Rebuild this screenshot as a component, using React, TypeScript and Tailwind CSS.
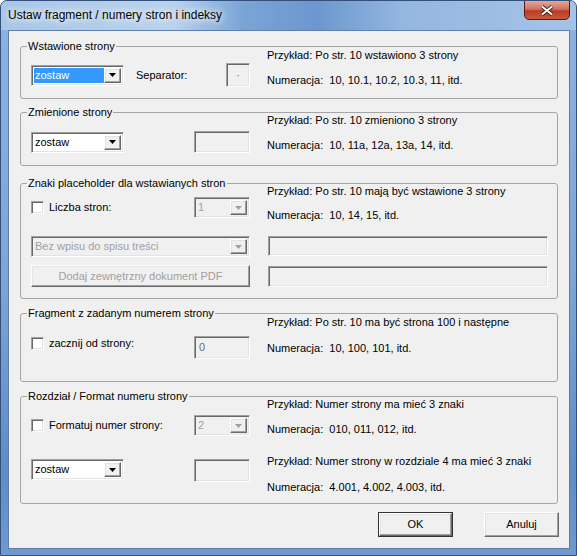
import React from "react";

const sunken =
  "border border-t-[#a0a0a0] border-l-[#a0a0a0] border-b-white border-r-white shadow-[inset_1px_1px_0_#696969,inset_-1px_-1px_0_#e3e3e3]";
const raised =
  "border border-t-white border-l-white border-b-[#696969] border-r-[#696969] shadow-[inset_-1px_-1px_0_#a0a0a0,inset_1px_1px_0_#e3e3e3]";

function Arrow({ disabled }: { disabled?: boolean }) {
  return (
    <svg width="7" height="4" viewBox="0 0 7 4">
      <path d="M0 0h7L3.5 4z" fill={disabled ? "#a0a0a0" : "#000"} />
    </svg>
  );
}

function Combo({
  value,
  width,
  selected,
  disabled,
}: {
  value: string;
  width: string;
  selected?: boolean;
  disabled?: boolean;
}) {
  return (
    <div
      className={`flex h-[21px] ${width} ${sunken} ${disabled ? "bg-[#f0f0f0]" : "bg-white"} p-[2px]`}
    >
      <div className="flex flex-1 items-center">
        <span
          className={`flex h-full items-center pl-px pr-2 ${
            selected ? "flex-1 bg-[#3399ff] text-white" : disabled ? "text-[#a0a0a0]" : "text-black"
          }`}
        >
          {value}
        </span>
      </div>
      <div className={`flex w-[17px] items-center justify-center bg-[#f0f0f0] ${raised}`}>
        <Arrow disabled={disabled} />
      </div>
    </div>
  );
}

function TextBox({ className, children }: { className: string; children?: React.ReactNode }) {
  return <div className={`flex bg-[#f0f0f0] ${sunken} ${className}`}>{children}</div>;
}

function Check({ label }: { label: string }) {
  return (
    <div className="flex items-center">
      <div className={`h-[13px] w-[13px] bg-white ${sunken}`} />
      <span className="ml-[5px]">{label}</span>
    </div>
  );
}

function Group({
  title,
  height,
  mt,
  children,
}: {
  title: string;
  height: string;
  mt: string;
  children: React.ReactNode;
}) {
  return (
    <div className={`relative ml-[11px] w-[538px] ${height} ${mt} rounded-[3px] border border-[#a5a5a5]`}>
      <span className="absolute left-[6px] top-[-7px] bg-[#f0f0f0] px-px leading-[13px]">{title}</span>
      <div className="flex h-full pl-[10px]">{children}</div>
    </div>
  );
}

export default function App() {
  return (
    <div className="h-[556px] w-[577px] bg-white font-['Liberation_Sans',sans-serif] text-[11px] leading-[13px] text-black">
      <div className="relative h-full w-full overflow-hidden rounded-t-[7px] border border-[#34507a] bg-[linear-gradient(180deg,#8fb3df_0%,#7ea5d6_50%,#5e8cc6_85%,#6f9ad0_100%)]">
        {/* title bar */}
        <div className="flex h-[29px] items-center bg-[linear-gradient(90deg,#a9c6e7_0%,#bad3ed_30%,#7ba4d6_42%,#6c97cf_55%,#94b7e0_70%,#a5c3e6_100%)] pl-[7px]">
          <span className="text-[12px] text-black [text-shadow:0_0_6px_#fff,0_0_10px_#fff]">
            Ustaw fragment / numery stron i indeksy
          </span>
        </div>
        <div className="absolute right-[6px] top-[-1px] flex h-[20px] w-[46px] items-center justify-center rounded-b-[5px] border border-[#5c1a12] bg-[linear-gradient(180deg,#e7a597_0%,#d0735f_45%,#b83a26_55%,#c95a3c_100%)]">
          <svg width="14" height="11" viewBox="0 0 14 11">
            <path d="M2 1.5L12 9.5M12 1.5L2 9.5" stroke="#3b1a14" strokeWidth="3.6" />
            <path d="M2 1.5L12 9.5M12 1.5L2 9.5" stroke="#fff" strokeWidth="2" />
          </svg>
        </div>

        {/* client area */}
        <div className="ml-[7px] h-[519px] w-[562px] border border-[#5f7fa8] bg-[#f0f0f0]">
          {/* Wstawione strony */}
          <Group title="Wstawione strony" height="h-[53px]" mt="mt-[15px]">
            <div className="w-[236px]">
              <div className="mt-[16px] flex items-center">
                <Combo value="zostaw" width="w-[93px]" selected />
                <span className="ml-[12px]">Separator:</span>
                <TextBox className="ml-auto mr-[17px] h-[24px] w-[24px] items-center justify-center text-[#6d6d6d]">
                  ·
                </TextBox>
              </div>
            </div>
            <div className="flex flex-col gap-[12px] pt-[2px]">
              <span>Przykład: Po str. 10 wstawiono 3 strony</span>
              <span>Numeracja:&nbsp; 10, 10.1, 10.2, 10.3, 11, itd.</span>
            </div>
          </Group>

          {/* Zmienione strony */}
          <Group title="Zmienione strony" height="h-[54px]" mt="mt-[13px]">
            <div className="w-[236px]">
              <div className="mt-[18px] flex w-[219px] items-center justify-between">
                <Combo value="zostaw" width="w-[93px]" />
                <TextBox className="h-[22px] w-[56px]" />
              </div>
            </div>
            <div className="flex flex-col gap-[12px] pt-[1px]">
              <span>Przykład: Po str. 10 zmieniono 3 strony</span>
              <span>Numeracja:&nbsp; 10, 11a, 12a, 13a, 14, itd.</span>
            </div>
          </Group>

          {/* Znaki placeholder */}
          <Group title="Znaki placeholder dla wstawianych stron" height="h-[116px]" mt="mt-[17px]">
            <div className="w-[236px]">
              <div className="mt-[13px] flex w-[219px] items-center justify-between">
                <Check label="Liczba stron:" />
                <Combo value="1" width="w-[56px]" disabled />
              </div>
              <div className="mt-[18px]">
                <Combo value="Bez wpisu do spisu treści" width="w-[219px]" disabled />
              </div>
              <div
                className={`mt-[8px] flex h-[22px] w-[219px] items-center justify-center bg-[#f0f0f0] text-[#a0a0a0] ${raised}`}
              >
                Dodaj zewnętrzny dokument PDF
              </div>
            </div>
            <div className="flex flex-col pt-[1px]">
              <span>Przykład: Po str. 10 mają być wstawione 3 strony</span>
              <span className="mt-[11px]">Numeracja:&nbsp; 10, 14, 15, itd.</span>
              <TextBox className="ml-px mt-[14px] h-[20px] w-[280px]" />
              <TextBox className="ml-px mt-[10px] h-[21px] w-[280px]" />
            </div>
          </Group>

          {/* Fragment z zadanym numerem strony */}
          <Group title="Fragment z zadanym numerem strony" height="h-[69px]" mt="mt-[14px]">
            <div className="w-[236px]">
              <div className="mt-[22px] flex w-[219px] items-start justify-between">
                <div className="mt-px">
                  <Check label="zacznij od strony:" />
                </div>
                <TextBox className="h-[23px] w-[56px] items-center pl-[4px] text-[#6d6d6d]">0</TextBox>
              </div>
            </div>
            <div className="flex flex-col gap-[13px] pt-[2px]">
              <span>Przykład: Po str. 10 ma być strona 100 i następne</span>
              <span>Numeracja:&nbsp; 10, 100, 101, itd.</span>
            </div>
          </Group>

          {/* Rozdział / Format numeru strony */}
          <Group title="Rozdział / Format numeru strony" height="h-[108px]" mt="mt-[14px]">
            <div className="w-[236px]">
              <div className="mt-[18px] flex w-[219px] items-center justify-between">
                <Check label="Formatuj numer strony:" />
                <Combo value="2" width="w-[56px]" disabled />
              </div>
              <div className="mt-[23px] flex w-[219px] items-start justify-between">
                <Combo value="zostaw" width="w-[93px]" />
                <TextBox className="h-[23px] w-[56px]" />
              </div>
            </div>
            <div className="flex flex-col pt-[1px]">
              <span>Przykład: Numer strony ma mieć 3 znaki</span>
              <span className="mt-[12px]">Numeracja:&nbsp; 010, 011, 012, itd.</span>
              <span className="mt-[19px]">Przykład: Numer strony w rozdziale 4 ma mieć 3 znaki</span>
              <span className="mt-[13px]">Numeracja:&nbsp; 4.001, 4.002, 4.003, itd.</span>
            </div>
          </Group>

          {/* buttons */}
          <div className="mt-[8px] flex justify-end gap-[31px] pr-[10px]">
            <div className="border border-[#333]">
              <div className={`flex h-[23px] w-[73px] items-center justify-center bg-[#f0f0f0] ${raised}`}>OK</div>
            </div>
            <div className={`flex h-[25px] w-[75px] items-center justify-center bg-[#f0f0f0] ${raised}`}>
              Anuluj
            </div>
          </div>
        </div>
      </div>
    </div>
  );
}
